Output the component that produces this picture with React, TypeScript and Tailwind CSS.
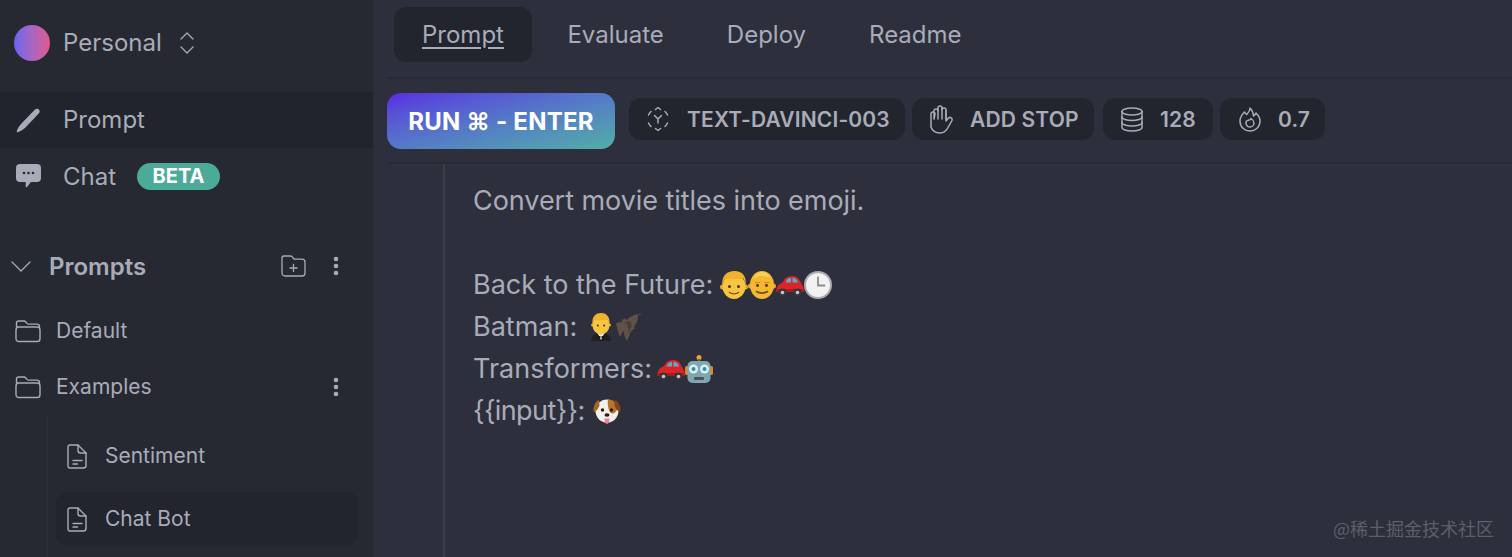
import type { ReactNode } from "react";

const stroke = {
  fill: "none",
  stroke: "currentColor",
  strokeLinecap: "round" as const,
  strokeLinejoin: "round" as const,
};

function FolderIcon() {
  return (
    <svg width="26" height="24" viewBox="0 0 26 24" className="shrink-0" {...stroke} strokeWidth="1.4">
      <path d="M1.5 8V4a2 2 0 0 1 2-2h5.6a2 2 0 0 1 1.5.7l1.6 1.9a1.5 1.5 0 0 0 1.2.5h8.6a2.5 2.5 0 0 1 2.5 2.5V8" />
      <rect x="1" y="8" width="24" height="14.5" rx="2.8" />
    </svg>
  );
}

function FileIcon() {
  return (
    <svg width="20" height="25" viewBox="0 0 20 25" className="shrink-0" {...stroke} strokeWidth="1.4">
      <path d="M3 1h8l8 8v12.5a2.5 2.5 0 0 1-2.5 2.5h-14A2 2 0 0 1 1 22V3a2 2 0 0 1 2-2Z" />
      <path d="M11 1v5.5A2.5 2.5 0 0 0 13.500 9H19" />
      <path d="M6 16.500h9M6 20h4.500" />
    </svg>
  );
}

function DotsIcon() {
  return (
    <svg width="6" height="20" viewBox="0 0 6 20" fill="currentColor" className="shrink-0">
      <circle cx="3" cy="3" r="2.300" />
      <circle cx="3" cy="10" r="2.300" />
      <circle cx="3" cy="17" r="2.300" />
    </svg>
  );
}

function Emoji({ children }: { children: ReactNode }) {
  return (
    <svg width="28" height="28" viewBox="0 0 28 28" className="shrink-0">
      {children}
    </svg>
  );
}

function YoungFace() {
  return (
    <Emoji>
      <circle cx="2.500" cy="16" r="2.500" fill="#e8a62c" />
      <circle cx="25.500" cy="16" r="2.500" fill="#e8a62c" />
      <ellipse cx="14" cy="15.500" rx="11.500" ry="12.500" fill="#f8c540" />
      <path d="M2.500 15C1 5 7 0 14.500 0S27 5 25.500 15c-.5-3.500-1.200-6-2.500-8-4 1.500-13 1.500-18 .4C3.500 9.500 3 12 2.500 15Z" fill="#f0b22f" />
      <circle cx="9.500" cy="15.500" r="1.500" fill="#4a3212" />
      <circle cx="18.500" cy="15.500" r="1.500" fill="#4a3212" />
      <path d="M9.500 21.500c2.500 1.800 6.500 1.800 9 0" fill="none" stroke="#7a4a16" strokeWidth="1.400" strokeLinecap="round" />
    </Emoji>
  );
}

function OldFace() {
  return (
    <Emoji>
      <circle cx="2.500" cy="15" r="2.500" fill="#e8a62c" />
      <circle cx="25.500" cy="15" r="2.500" fill="#e8a62c" />
      <ellipse cx="14" cy="14" rx="12" ry="14" fill="#f4b730" />
      <path d="M6 7C7 3 10 1 14 1s7 2 8 6c-2-1.500-5-2-8-2s-6 .5-8 2Z" fill="#f9cf5c" />
      <path d="M7.500 11.500h4M16.500 11.500h4" stroke="#c98a1e" strokeWidth="1.200" strokeLinecap="round" />
      <circle cx="9.500" cy="14.500" r="1.400" fill="#4a3212" />
      <circle cx="18.500" cy="14.500" r="1.400" fill="#4a3212" />
      <path d="M8.500 20.500c3 2.200 8 2.200 11 0" fill="none" stroke="#7a4a16" strokeWidth="1.600" strokeLinecap="round" />
    </Emoji>
  );
}

function Car() {
  return (
    <Emoji>
      <path d="M7 11C8.500 7 11.500 5 16 5c4 0 6.500 1.500 8 5l2.500 4.500c1 2 1.500 3.500 1 6.500H.5c-.5-3 .5-6 3-8Z" fill="#dc2429" />
      <path d="M9.500 11.500C10.500 8.500 12 7 15 6.800V11.500Zm7-4.700c2.800 0 4.600 1.500 5.500 4.700h-5.500Z" fill="#5fa9c9" />
      <rect x=".5" y="18" width="27" height="3" rx="1.500" fill="#a81c20" />
      <circle cx="6.500" cy="21.500" r="4" fill="#35353a" />
      <circle cx="6.500" cy="21.500" r="1.800" fill="#c9c9cd" />
      <circle cx="21.500" cy="21.500" r="4" fill="#35353a" />
      <circle cx="21.500" cy="21.500" r="1.800" fill="#c9c9cd" />
    </Emoji>
  );
}

function Clock() {
  return (
    <Emoji>
      <circle cx="14" cy="14" r="14" fill="#a9abb0" />
      <circle cx="14" cy="14" r="12" fill="#f2f2f2" />
      <path d="M14 6.500V14.500H20.500" fill="none" stroke="#8a8c92" strokeWidth="1.800" strokeLinecap="round" />
    </Emoji>
  );
}

function Waiter() {
  return (
    <Emoji>
      <path d="M4 28c0-5 4-8 10-8s10 3 10 8Z" fill="#1f1f24" />
      <path d="M10.500 20h7L14 27Z" fill="#f2f2f2" />
      <path d="M11 22.500l3 1.200 3-1.200v3l-3-1.200-3 1.200Z" fill="#111" />
      <circle cx="5.500" cy="12" r="1.500" fill="#e8a62c" />
      <circle cx="22.500" cy="12" r="1.500" fill="#e8a62c" />
      <ellipse cx="14" cy="12" rx="8.500" ry="9.500" fill="#f8c540" />
      <path d="M5.500 12C4.500 3 9 0 14 0s9.500 3 8.500 12c-.5-2.500-1-4-2-5.500-3.500 1-9.500 1-13 0-1 1.500-1.500 3-2 5.500Z" fill="#f0b22f" />
      <circle cx="10.800" cy="12.500" r="1" fill="#4a3212" />
      <circle cx="17.200" cy="12.500" r="1" fill="#4a3212" />
    </Emoji>
  );
}

function Bat() {
  return (
    <Emoji>
      <path d="M28 1C21 .5 15 3 12 7c-1-.8-1.500-1.300-2-2L9 7 7 5.500c-.3 1.500 0 3 .5 4-2-.5-4-.5-6.500 1 1 4 2 9 4 13.500 1-2 2-4.500 3.500-6 .5 3.500 1.500 6.500 3 10 1.500-2 3-4.500 3.500-7.500 1.500-3 2.500-4 5-5-.8-1-.8-2 0-3.500 2-2 3-5.500 3-10Z" fill="#5f5249" />
      <path d="M9 9.500c3 .5 5 5 4.500 12 1-4 2-6 3-7.500.5-2 0-4-2-6-2 .5-4 1-5.500 1.500Z" fill="#4a3f38" />
    </Emoji>
  );
}

function Robot() {
  return (
    <Emoji>
      <circle cx="14" cy="2.500" r="2.500" fill="#eaa33a" />
      <rect x="13" y="4" width="2" height="3" fill="#8a5f2a" />
      <rect x="0" y="11" width="3.500" height="9" rx="1.500" fill="#e0862f" />
      <rect x="24.500" y="11" width="3.500" height="9" rx="1.500" fill="#e0862f" />
      <rect x="2.500" y="6" width="23" height="22" rx="5" fill="#80a6af" />
      <circle cx="8.500" cy="14" r="4.500" fill="#d8f1f6" />
      <circle cx="19.500" cy="14" r="4.500" fill="#d8f1f6" />
      <circle cx="8.500" cy="14" r="2" fill="#2a93b8" />
      <circle cx="19.500" cy="14" r="2" fill="#2a93b8" />
      <rect x="9" y="22" width="10" height="3" rx="1" fill="#46565c" />
    </Emoji>
  );
}

function Dog() {
  return (
    <Emoji>
      <ellipse cx="14" cy="14" rx="11.500" ry="11.500" fill="#f4f1ec" />
      <path d="M15 2.500c5 0 9 3 9.500 9-1 3-3 5.500-5.500 5-3-.5-5-8.500-4-14Z" fill="#b8742a" />
      <path d="M6 3C2.500 4 0 9 .5 15c2.500 0 4.500-3 6-6.500Z" fill="#a8661f" />
      <path d="M22 3c3.500 1 6 6 5.500 12-2.500 0-4.500-3-6-6.500Z" fill="#7d4716" />
      <circle cx="9.500" cy="13" r="1.700" fill="#2a1c10" />
      <circle cx="18.500" cy="13" r="1.700" fill="#2a1c10" />
      <ellipse cx="14" cy="18" rx="2.500" ry="1.800" fill="#2a1c10" />
      <path d="M11.500 21.500h5c0 3-1 5.500-2.500 5.500s-2.500-2.500-2.500-5.500Z" fill="#ef7f93" />
    </Emoji>
  );
}

function Chip({ icon, label, className }: { icon: ReactNode; label: string; className: string }) {
  return (
    <div className={`mb-[3px] flex h-[42px] items-center rounded-xl bg-[#22252e] text-[21px] font-semibold tracking-[0.15px] text-[#a9acb8] ${className}`}>
      {icon}
      <span className="whitespace-nowrap pt-px leading-none">{label}</span>
    </div>
  );
}

export default function App() {
  return (
    <div className="flex h-[557px] w-[1512px] overflow-hidden bg-[#2d303c] font-['Inter',sans-serif] text-[#a9acb8]">
      {/* Sidebar */}
      <aside className="flex w-[375px] shrink-0 flex-col border-r-2 border-[#2b2e39] bg-[#262932]">
        <div className="flex h-[86px] shrink-0 items-center pl-3.5">
          <div className="h-[36px] w-[36px] rounded-full bg-gradient-to-r from-[#6a63f0] to-[#e0568f]" />
          <span className="ml-[13px] text-[24px]">Personal</span>
          <svg width="14" height="22" viewBox="0 0 14 22" className="ml-[18px]" {...stroke} strokeWidth="1.300">
            <path d="M1 7l6-6 6 6M1 15l6 6 6-6" />
          </svg>
        </div>

        <div className="mt-1.5 flex h-[56px] shrink-0 items-center bg-[#21242d] pl-4">
          <svg width="25" height="25" viewBox="0 0 25 25" fill="currentColor">
            <path d="M19 1.500c1.500-1.200 3.500-.8 4.300.5.700 1.200.4 2.500-.6 3.500L9 20c-2 1.800-5 3.300-7.500 4.200-.6.200-1-.2-.8-.8C1.500 21 3 18 5 16Z" />
          </svg>
          <span className="ml-[22px] text-[24px]">Prompt</span>
        </div>

        <div className="flex h-[56px] shrink-0 items-center pl-4">
          <svg width="25" height="24" viewBox="0 0 25 24" fill="currentColor">
            <path d="M4 0h17a4 4 0 0 1 4 4v10a4 4 0 0 1-4 4h-6l-4 5c-.6.700-1.300.4-1.300-.4V18H4a4 4 0 0 1-4-4V4a4 4 0 0 1 4-4Z" />
            <circle cx="8" cy="9" r="1.300" fill="#262932" />
            <circle cx="12.500" cy="9" r="1.300" fill="#262932" />
            <circle cx="17" cy="9" r="1.300" fill="#262932" />
          </svg>
          <span className="ml-[22px] pt-px text-[24px]">Chat</span>
          <span className="ml-[21px] flex h-[27px] w-[83px] items-center justify-center rounded-full bg-[#4caa98] text-[20px] font-bold text-white">
            BETA
          </span>
        </div>

        <div className="mt-[34px] flex h-[56px] shrink-0 items-center pl-[11px]">
          <svg width="20" height="11" viewBox="0 0 20 11" {...stroke} strokeWidth="1.300">
            <path d="M1 1l9 9 9-9" />
          </svg>
          <span className="ml-[18px] pt-0.5 text-[24px] font-semibold">Prompts</span>
          <svg width="25" height="22" viewBox="0 0 25 22" className="ml-[135px]" {...stroke} strokeWidth="1.300">
            <path d="M3 1h6.500a2 2 0 0 1 1.500.7l1.500 1.800a2 2 0 0 0 1.500.7H21a3 3 0 0 1 3 3V18a3 3 0 0 1-3 3H4a3 3 0 0 1-3-3V3a2 2 0 0 1 2-2Z" />
            <path d="M12.500 9.500v7M9 13h7" />
          </svg>
          <span className="ml-[27px]">
            <DotsIcon />
          </span>
        </div>

        <div className="mt-[17px] flex h-[40px] shrink-0 items-center pl-[15px] text-[21px]">
          <FolderIcon />
          <span className="ml-[15px]">Default</span>
        </div>

        <div className="mt-4 flex h-[40px] shrink-0 items-center pl-[15px] text-[21px]">
          <FolderIcon />
          <span className="ml-[15px]">Examples</span>
          <span className="ml-[181px]">
            <DotsIcon />
          </span>
        </div>

        <div className="ml-[46px] mt-[8px] flex flex-1 flex-col border-l-2 border-[#2b2e39] pl-2 pr-[15px] text-[21px]">
          <div className="mt-[14px] flex h-[54px] shrink-0 items-center pl-[11px]">
            <FileIcon />
            <span className="ml-[18px]">Sentiment</span>
          </div>
          <div className="mt-[9px] flex h-[54px] shrink-0 items-center rounded-xl bg-[#22252e] pl-[11px]">
            <FileIcon />
            <span className="ml-[18px]">Chat Bot</span>
          </div>
        </div>
      </aside>

      {/* Main */}
      <main className="relative flex min-w-0 flex-1 flex-col pl-[13px]">
        <div className="flex h-[79px] shrink-0 items-start border-b-2 border-[#272a34] pl-1.5 pt-[7px] text-[24px]">
          <div className="mr-1 flex h-[55px] items-center rounded-xl bg-[#22252e] px-7 underline underline-offset-4">
            Prompt
          </div>
          <div className="flex h-[55px] items-center px-[31.5px]">Evaluate</div>
          <div className="flex h-[55px] items-center px-[31.5px]">Deploy</div>
          <div className="flex h-[55px] items-center px-[31.5px]">Readme</div>
        </div>

        <div className="flex h-[85px] shrink-0 items-center border-b-2 border-[#272a34]">
          <div className="-ml-px flex h-[56px] w-[228px] items-center justify-center whitespace-nowrap rounded-[14px] bg-gradient-to-br from-[#5a27e0] to-[#52aea6] pt-0.5 text-[24px] font-bold tracking-[0.25px] text-white">
            RUN ⌘ - ENTER
          </div>
          <Chip
            className="ml-[14px] w-[276px] pl-4"
            label="TEXT-DAVINCI-003"
            icon={
              <svg width="26" height="26" viewBox="0 0 26 26" className="mr-[16px] shrink-0" {...stroke} strokeWidth="1.500">
                <path d="M6 5.500A10 10 0 0 0 3.500 9M20 5.500A10 10 0 0 1 22.500 9M3.500 17A10 10 0 0 0 6 20.500M22.500 17A10 10 0 0 1 20 20.500" />
                <path d="M10.500 3.500L13 1.500l2.500 2M10.500 22.500l2.500 2 2.500-2" />
                <path d="M9.500 9.500L13 13l3.500-3.500M13 13v4" />
              </svg>
            }
          />
          <Chip
            className="ml-[7px] w-[182px] pl-4"
            label="ADD STOP"
            icon={
              <svg width="26" height="29" viewBox="0 0 26 29" className="mr-4 shrink-0" {...stroke} strokeWidth="1.500">
                <path d="M6 14V6a2 2 0 0 1 4 0V3a2 2 0 0 1 4 0v2a2 2 0 0 1 4 0v11l2.500-3a2.200 2.200 0 0 1 3.500 2.500l-4 7c-1.500 3-4 5.500-8 5.500-5 0-8-3-9-6V9a2 2 0 0 1 4 0Z" />
                <path d="M10 6v8M14 4v10M18 6v8" />
              </svg>
            }
          />
          <Chip
            className="ml-[9px] w-[110px] pl-[18px]"
            label="128"
            icon={
              <svg width="22" height="25" viewBox="0 0 22 25" className="mr-[17px] shrink-0" {...stroke} strokeWidth="1.500">
                <ellipse cx="11" cy="4.500" rx="10" ry="3.500" />
                <path d="M1 4.500v16c0 2 4.500 3.500 10 3.500s10-1.500 10-3.500v-16" />
                <path d="M1 10c0 2 4.500 3.500 10 3.500S21 12 21 10M1 15.500c0 2 4.500 3.500 10 3.500s10-1.500 10-3.500" />
              </svg>
            }
          />
          <Chip
            className="ml-[7px] w-[105px] pl-[19px]"
            label="0.7"
            icon={
              <svg width="22" height="25" viewBox="0 0 22 25" className="mr-[17px] shrink-0" {...stroke} strokeWidth="1.500">
                <path d="M11 1c0 4-2 5-3.500 6.500C6.500 6.500 6 6 5.500 5 3 7.500 1 10.500 1 14c0 6 4.500 10 10 10s10-4 10-10c0-3-2-6-4-8-.5 1.500-1.500 2.500-2.500 3C14.500 6 13 3 11 1Z" />
                <path d="M11 20a4 4 0 0 0 4-4c0-2-1.500-3.500-3-4.500 0 2-3 1.500-4.500 2.500A4 4 0 0 0 11 20Z" />
              </svg>
            }
          />
        </div>

        <div className="ml-[55px] flex-1 border-l-2 border-[#3a3d48] pl-7 pt-4 text-[27px] leading-[42px]">
          <div className="tracking-[-0.05px]">Convert movie titles into emoji.</div>
          <div className="h-[42px]" />
          <div className="flex items-center">
            Back to the Future:
            <span className="ml-[7px] flex items-center">
              <YoungFace />
              <OldFace />
              <Car />
              <Clock />
            </span>
          </div>
          <div className="flex items-center">
            Batman:
            <span className="ml-2.5 flex items-center">
              <Waiter />
              <Bat />
            </span>
          </div>
          <div className="flex items-center">
            Transformers:
            <span className="ml-[5px] flex items-center">
              <Car />
              <Robot />
            </span>
          </div>
          <div className="flex items-center">
            <span className="tracking-[-0.6px]">{"{{input}}:"}</span>
            <span className="ml-2 flex items-center">
              <Dog />
            </span>
          </div>
        </div>

        <span className="absolute bottom-[15px] right-[18px] font-['Noto_Sans_CJK_SC',sans-serif] text-[18px] text-[#5c5f69]">
          @稀土掘金技术社区
        </span>
      </main>
    </div>
  );
}
